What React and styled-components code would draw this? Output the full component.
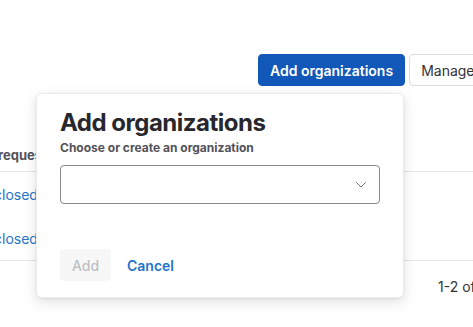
import React from 'react';
import styled, {createGlobalStyle} from 'styled-components';

let GlobalStyle = createGlobalStyle`
    html, body {
        margin: 0;
        padding: 0;
        background: #fff;
        overflow: hidden;
    }
    body {
        font-family: Inter, "Noto Sans", "Liberation Sans", sans-serif;
        font-size: 14px;
        color: #333238;
    }
`

let Page = styled.div`
    position: relative;
    width: 473px;
    height: 327px;
    overflow: hidden;
    padding-top: 54px;
    box-sizing: border-box;
`

let Toolbar = styled.div`
    display: flex;
    gap: 4px;
    padding-left: 258px;
    white-space: nowrap;
`

let Button = styled.button`
    display: inline-flex;
    align-items: center;
    height: 32px;
    padding: 0 11px;
    border-radius: 4px;
    font-family: inherit;
    font-size: 14px;
    white-space: nowrap;
    border: 1px solid ${p => p.$primary ? '#1158b8' : '#dcdcde'};
    background: ${p => p.$primary ? '#1158b8' : '#fff'};
    color: ${p => p.$primary ? '#fff' : '#333238'};
    font-weight: ${p => p.$primary ? 600 : 400};
    flex-shrink: 0;
`

let Table = styled.div`
    margin-top: 52px;
    margin-left: -6px;
    border-bottom: 1px solid #e7e7e9;
`

let HeadRow = styled.div`
    display: flex;
    align-items: center;
    height: 33px;
    border-bottom: 1px solid #e7e7e9;
    font-size: 13px;
    font-weight: 700;
    color: #535158;
    padding-left: 4px;
`

let Row = styled.div`
    display: flex;
    align-items: center;
    height: 44px;
`

let Link = styled.a`
    color: #1f75cb;
    text-decoration: none;
    font-size: 14px;
`

let Pagination = styled.div`
    margin-top: 16px;
    padding-left: 438px;
    line-height: 20px;
    white-space: nowrap;
    color: #333238;
`

let Popover = styled.div`
    position: absolute;
    top: 93px;
    left: 36px;
    width: 368px;
    box-sizing: border-box;
    padding: 14px 23px 16px;
    background: #fff;
    border: 1px solid #ececef;
    border-radius: 5px;
    box-shadow: 0 4px 14px rgba(5, 5, 6, 0.12), 0 1px 3px rgba(5, 5, 6, 0.06);
`

let Title = styled.h2`
    margin: 0;
    font-size: 24px;
    line-height: 30px;
    font-weight: 700;
    color: #28272d;
    letter-spacing: -0.5px;
`

let Label = styled.div`
    margin-top: 2px;
    font-size: 12px;
    line-height: 16px;
    font-weight: 700;
    color: #535158;
`

let Select = styled.div`
    margin-top: 9px;
    height: 39px;
    box-sizing: border-box;
    border: 1px solid #89888d;
    border-radius: 4px;
    display: flex;
    align-items: center;
    justify-content: flex-end;
    padding-right: 13px;
`

let Footer = styled.div`
    margin-top: 45px;
    display: flex;
    align-items: center;
    gap: 16px;
`

let DisabledButton = styled.button`
    height: 32px;
    width: 51px;
    border: none;
    border-radius: 4px;
    background: #f7f7f8;
    color: #bfbfc3;
    font-family: inherit;
    font-size: 14px;
    font-weight: 500;
`

let LinkButton = styled.button`
    border: none;
    background: none;
    padding: 0;
    color: #1f75cb;
    font-family: inherit;
    font-size: 14px;
    font-weight: 600;
`

export default function App(){
    return (
        <Page>
            <GlobalStyle/>
            <Toolbar>
                <Button $primary>Add organizations</Button>
                <Button>Manage</Button>
            </Toolbar>
            <Table>
                <HeadRow>requests</HeadRow>
                <Row><Link href="#">closed</Link></Row>
                <Row><Link href="#">closed</Link></Row>
            </Table>
            <Pagination>1-2 of 2</Pagination>
            <Popover>
                <Title>Add organizations</Title>
                <Label>Choose or create an organization</Label>
                <Select>
                    <svg width="10" height="6" viewBox="0 0 10 6" fill="none">
                        <path d="M0.5 0.5 L5 5 L9.5 0.5" stroke="#737278" strokeWidth="1" strokeLinecap="round" strokeLinejoin="round"/>
                    </svg>
                </Select>
                <Footer>
                    <DisabledButton disabled>Add</DisabledButton>
                    <LinkButton>Cancel</LinkButton>
                </Footer>
            </Popover>
        </Page>
    )
}
